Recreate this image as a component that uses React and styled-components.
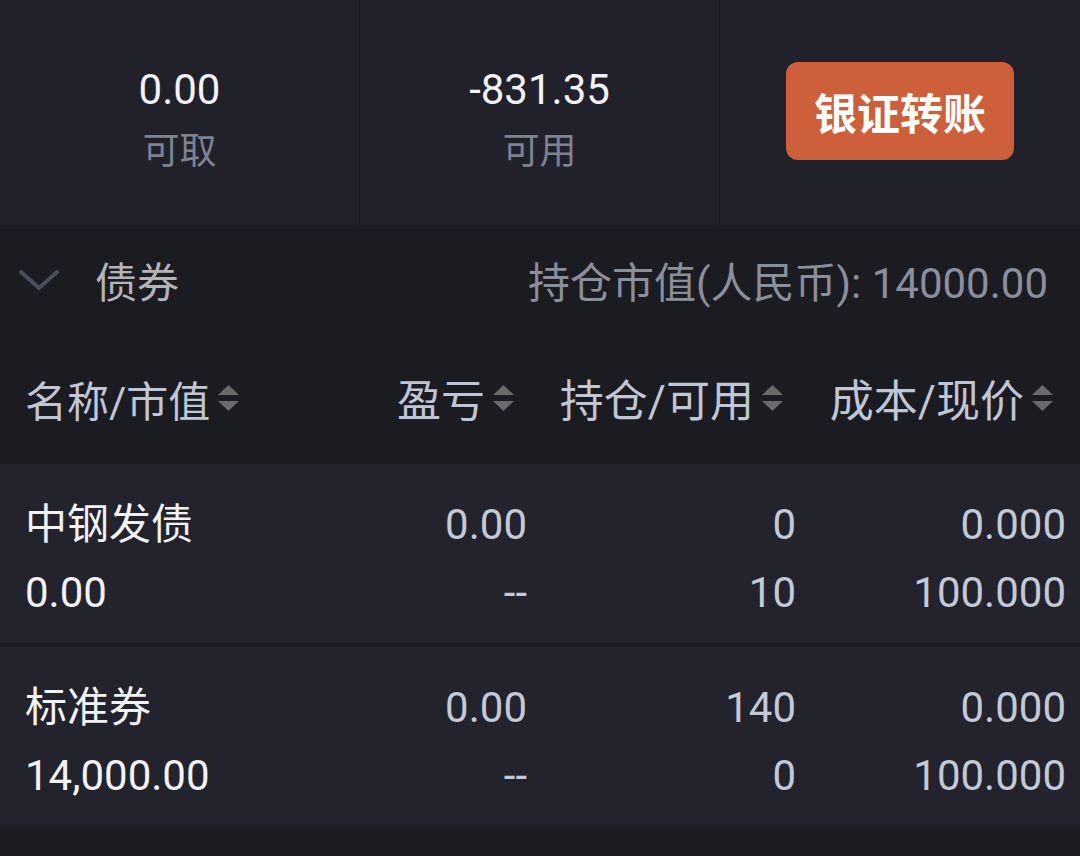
import React from "react";
import styled, { createGlobalStyle } from "styled-components";

const Global = createGlobalStyle`
  html, body { margin: 0; padding: 0; background: #1b1c22; }
  body { font-family: Roboto, "Noto Sans CJK SC", sans-serif; }
  * { box-sizing: border-box; }
`;

const Page = styled.div`
  width: 1080px;
  min-height: 856px;
  background: #1b1c22;
  font-family: Roboto, "Noto Sans CJK SC", sans-serif;
`;

const Summary = styled.section`
  display: grid;
  grid-template-columns: repeat(3, 1fr);
  height: 225px;
  background: #21212b;
`;

const StatCell = styled.div`
  display: flex;
  flex-direction: column;
  align-items: center;
  padding-top: 62px;
  border-right: 1px solid #1a1a21;
`;

const StatValue = styled.div`
  font-size: 42px;
  line-height: 56px;
  color: #f2f2f4;
`;

const StatLabel = styled.div`
  font-size: 37px;
  line-height: 52px;
  margin-top: 8px;
  color: #7d8391;
`;

const ButtonCell = styled.div`
  display: flex;
  justify-content: center;
  align-items: flex-start;
  padding-top: 62px;
`;

const TransferButton = styled.button`
  width: 228px;
  height: 98px;
  border: none;
  border-radius: 12px;
  background: #cd5f3a;
  color: #fff;
  font-family: inherit;
  font-size: 43px;
  font-weight: 700;
  padding: 0;
`;

const SectionHeader = styled.div`
  display: flex;
  align-items: center;
  height: 115px;
  padding: 0 32px 6px 19px;
`;

const Title = styled.div`
  margin-left: 36px;
  font-size: 42px;
  color: #b4b4b8;
`;

const Total = styled.div`
  margin-left: auto;
  font-size: 42px;
  color: #8a8f9c;
`;

const Grid = styled.div`
  display: grid;
  grid-template-columns: 232px 270px 269px 1fr;
  padding: 0 14px 0 25px;
`;

const HeaderRow = styled(Grid)`
  height: 124px;
  padding-bottom: 8px;
  align-items: center;
`;

const HeaderCell = styled.div`
  display: flex;
  align-items: center;
  justify-content: ${(p) => (p.$left ? "flex-start" : "flex-end")};
  padding-right: ${(p) => (p.$left ? "0" : "13px")};
  gap: 8px;
  font-size: ${(p) => (p.$left ? "42px" : "44px")};
  color: #c0c6d4;
  white-space: nowrap;
`;

const Rows = styled.div`
  display: flex;
  flex-direction: column;
  gap: 4px;
`;

const Row = styled(Grid)`
  height: 179px;
  padding-top: 27px;
  background: #22232d;
  align-items: start;
`;

const Cell = styled.div`
  display: flex;
  flex-direction: column;
  align-items: ${(p) => (p.$left ? "flex-start" : "flex-end")};
`;

const Line = styled.div`
  font-size: 42px;
  line-height: 68px;
  color: ${(p) => (p.$bright ? "#f2f2f4" : "#c3c9d7")};
  white-space: nowrap;
`;

const SortIcon = () => (
  <svg width="21" height="26" viewBox="0 0 21 26">
    <polygon points="10.5,0 21,10 0,10" fill="#6a6a6c" />
    <polygon points="0,16 21,16 10.5,26" fill="#6a6a6c" />
  </svg>
);

const Chevron = () => (
  <svg width="40" height="22" viewBox="0 0 40 22">
    <polyline
      points="2,3 20,19 38,3"
      fill="none"
      stroke="#4b4f5b"
      strokeWidth="4"
      strokeLinecap="round"
      strokeLinejoin="round"
    />
  </svg>
);

const rows = [
  { name: "中钢发债", mv: "0.00", pl: ["0.00", "--"], pos: ["0", "10"], price: ["0.000", "100.000"] },
  { name: "标准券", mv: "14,000.00", pl: ["0.00", "--"], pos: ["140", "0"], price: ["0.000", "100.000"] },
];

export default function App() {
  return (
    <Page>
      <Global />
      <Summary>
        <StatCell>
          <StatValue>0.00</StatValue>
          <StatLabel>可取</StatLabel>
        </StatCell>
        <StatCell>
          <StatValue>-831.35</StatValue>
          <StatLabel>可用</StatLabel>
        </StatCell>
        <ButtonCell>
          <TransferButton>银证转账</TransferButton>
        </ButtonCell>
      </Summary>

      <SectionHeader>
        <Chevron />
        <Title>债券</Title>
        <Total>持仓市值(人民币): 14000.00</Total>
      </SectionHeader>

      <HeaderRow>
        <HeaderCell $left>
          名称/市值
          <SortIcon />
        </HeaderCell>
        <HeaderCell>
          盈亏
          <SortIcon />
        </HeaderCell>
        <HeaderCell>
          持仓/可用
          <SortIcon />
        </HeaderCell>
        <HeaderCell>
          成本/现价
          <SortIcon />
        </HeaderCell>
      </HeaderRow>

      <Rows>
        {rows.map((r) => (
          <Row key={r.name}>
            <Cell $left>
              <Line $bright>{r.name}</Line>
              <Line $bright>{r.mv}</Line>
            </Cell>
            <Cell>
              <Line>{r.pl[0]}</Line>
              <Line>{r.pl[1]}</Line>
            </Cell>
            <Cell>
              <Line>{r.pos[0]}</Line>
              <Line>{r.pos[1]}</Line>
            </Cell>
            <Cell>
              <Line>{r.price[0]}</Line>
              <Line>{r.price[1]}</Line>
            </Cell>
          </Row>
        ))}
      </Rows>
    </Page>
  );
}
